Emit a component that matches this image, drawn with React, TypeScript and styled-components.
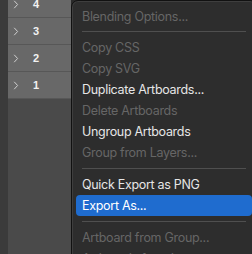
import styled, { createGlobalStyle } from "styled-components";

const Global = createGlobalStyle`
  html, body {
    margin: 0;
    padding: 0;
    background: #2a2a2a;
    overflow: hidden;
  }
  body {
    font-family: Inter, "Noto Sans", "Liberation Sans", sans-serif;
    -webkit-font-smoothing: antialiased;
  }
`;

type Entry =
  | { kind: "item"; label: string; disabled?: boolean; active?: boolean }
  | { kind: "sep" };

const entries: Entry[] = [
  { kind: "item", label: "Blending Options...", disabled: true },
  { kind: "sep" },
  { kind: "item", label: "Copy CSS", disabled: true },
  { kind: "item", label: "Copy SVG", disabled: true },
  { kind: "item", label: "Duplicate Artboards..." },
  { kind: "item", label: "Delete Artboards", disabled: true },
  { kind: "item", label: "Ungroup Artboards" },
  { kind: "item", label: "Group from Layers...", disabled: true },
  { kind: "sep" },
  { kind: "item", label: "Quick Export as PNG" },
  { kind: "item", label: "Export As...", active: true },
  { kind: "sep" },
  { kind: "item", label: "Artboard from Group...", disabled: true },
  { kind: "item", label: "Artboards from Layers...", disabled: true },
];

const layers = ["4", "3", "2", "1"];

const Screen = styled.div`
  display: flex;
  width: 252px;
  height: 254px;
  overflow: hidden;
`;

const Panel = styled.div`
  display: flex;
  width: 71px;
  flex: none;
  background: #4a4a4a;
`;

const Strip = styled.div`
  width: 8px;
  background: #3b3b3b;
`;

const LayerList = styled.div`
  flex: 1;
  display: flex;
  flex-direction: column;
  margin-top: -9px;
`;

const LayerRow = styled.div`
  height: 26px;
  display: flex;
  align-items: center;
  background: #686868;
  border-bottom: 1px solid #575757;
  color: #f2f2f2;
  font-family: "Liberation Sans", Arial, sans-serif;
`;

const Chevron = styled.svg`
  width: 6px;
  height: 9px;
  margin-left: 5px;
  margin-right: 14px;
`;

const LayerName = styled.span`
  font-size: 11px;
  font-weight: bold;
`;

const Menu = styled.div`
  width: 176px;
  flex: none;
  display: flex;
  flex-direction: column;
  padding: 5px 4px;
  background: #2d2d2d;
  border: 1px solid #111;
  border-radius: 7px;
  box-shadow: inset 0 0 0 1px #3e3e3e;
  height: 300px;
`;

const Item = styled.div<{ $disabled?: boolean; $active?: boolean }>`
  height: 21px;
  display: flex;
  align-items: center;
  padding: 0 6px;
  border-radius: 4px;
  font-size: 12.5px;
  letter-spacing: -0.3px;
  white-space: nowrap;
  color: ${(p) => (p.$active ? "#ffffff" : p.$disabled ? "#666666" : "#e6e6e6")};
  background: ${(p) => (p.$active ? "#1f6ccf" : "transparent")};
`;

const Separator = styled.div<{ $first?: boolean }>`
  height: 1px;
  margin: ${(p) => (p.$first ? "4px 6px 5px" : "5px 6px")};
  background: #4f4f4f;
`;

export default function App() {
  return (
    <>
      <Global />
      <Screen>
        <Panel>
          <Strip />
          <LayerList>
            {layers.map((n) => (
              <LayerRow key={n}>
                <Chevron viewBox="0 0 6 9">
                  <path d="M1.2 0.8 L4.6 4.5 L1.2 8.2" fill="none" stroke="#cfcfcf" strokeWidth="1" />
                </Chevron>
                <LayerName>{n}</LayerName>
              </LayerRow>
            ))}
          </LayerList>
        </Panel>
        <Menu>
          {entries.map((e, i) =>
            e.kind === "sep" ? (
              <Separator key={i} $first={i === 1} />
            ) : (
              <Item key={i} $disabled={e.disabled} $active={e.active}>
                {e.label}
              </Item>
            )
          )}
        </Menu>
      </Screen>
    </>
  );
}
